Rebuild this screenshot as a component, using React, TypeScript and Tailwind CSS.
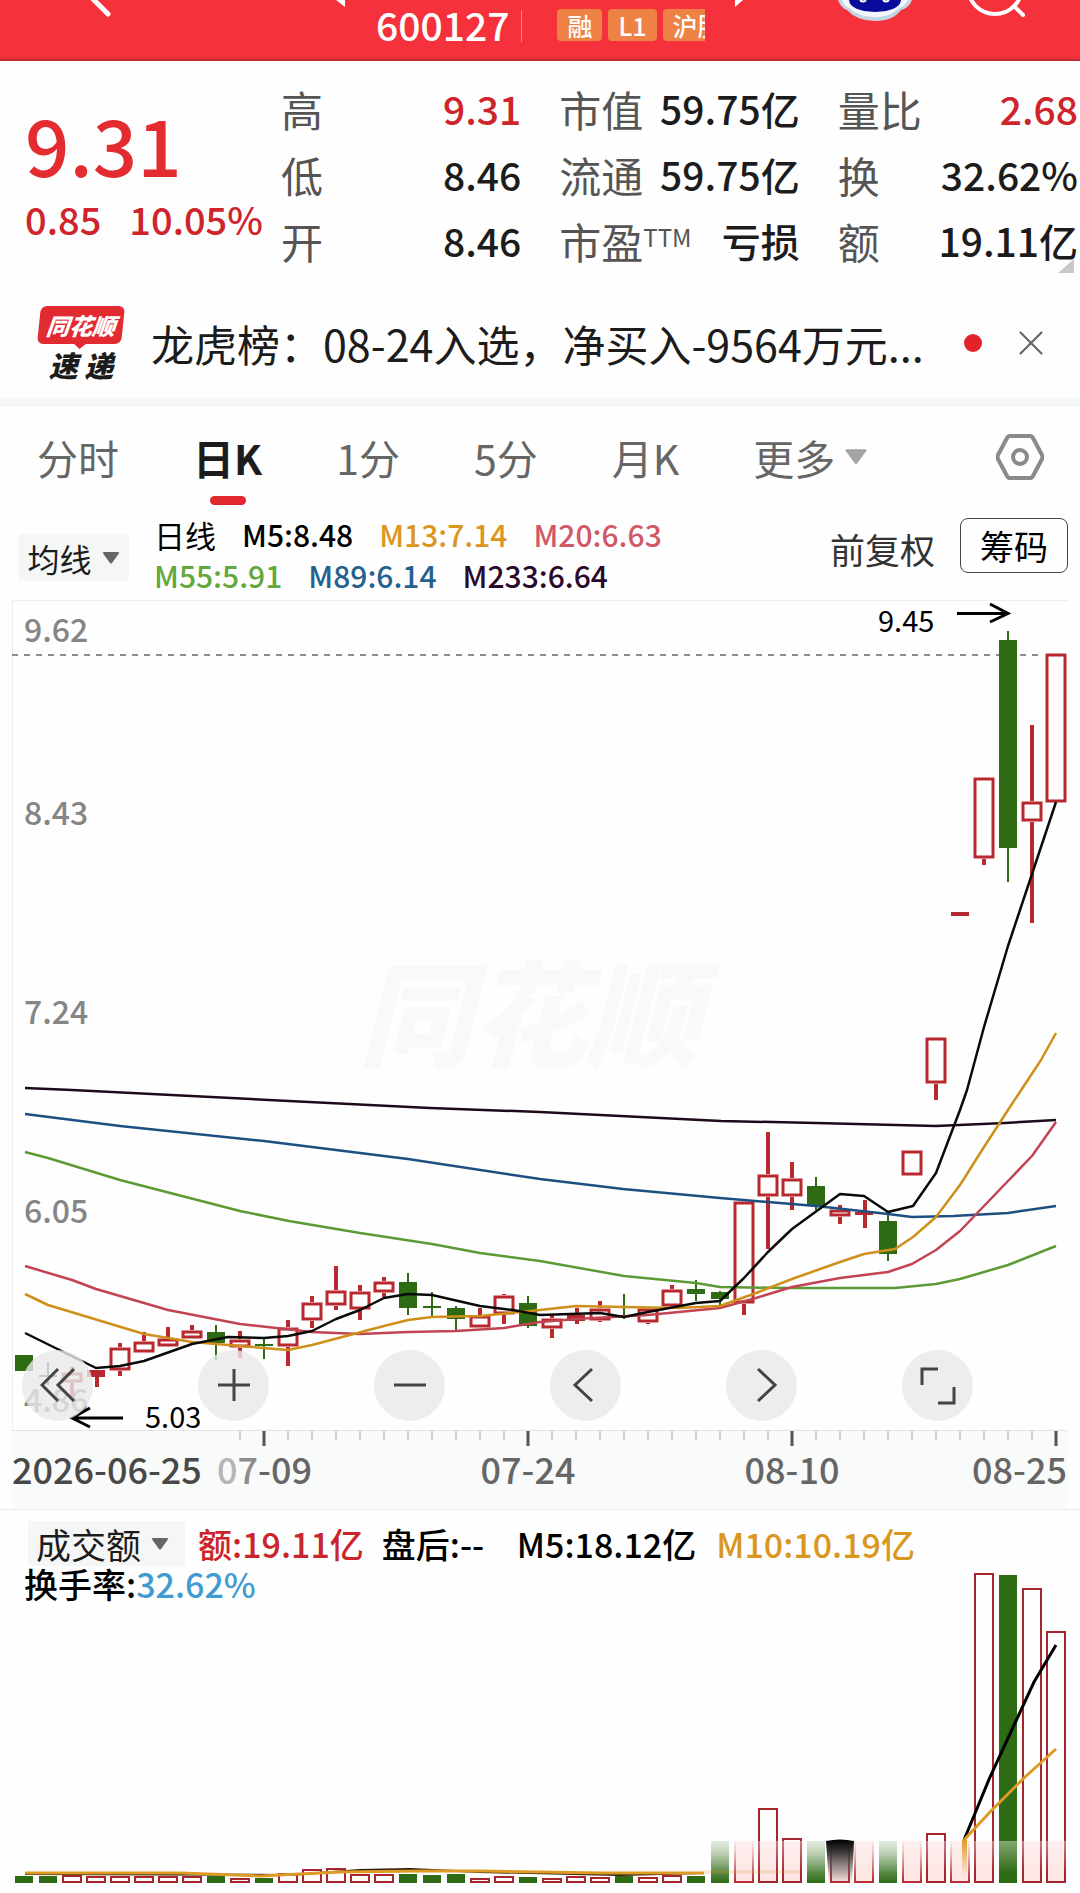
import { ReactNode } from 'react'
import { X } from 'lucide-react'

// body top, body bottom, wick top, wick bottom, rising
type Candle = [number, number, number, number, boolean]
type Point = [number, number]

const STEP = 24
const FIRST_X = 24
const RED = '#b8292f'
const GREEN = '#2f6b14'

const candles: Candle[] = [
  [1355, 1371, 1355, 1371, false],
  [1375, 1377, 1362, 1385, false],
  [1372, 1383, 1367, 1397, true],
  [1370, 1377, 1370, 1387, true],
  [1347, 1371, 1343, 1376, true],
  [1341, 1353, 1332, 1353, true],
  [1338, 1347, 1327, 1347, true],
  [1330, 1339, 1325, 1339, true],
  [1332, 1343, 1325, 1360, false],
  [1339, 1348, 1331, 1358, true],
  [1344, 1346, 1337, 1359, false],
  [1327, 1347, 1320, 1366, true],
  [1302, 1321, 1296, 1328, true],
  [1290, 1306, 1266, 1310, true],
  [1291, 1310, 1285, 1320, true],
  [1281, 1293, 1277, 1297, true],
  [1282, 1308, 1273, 1315, false],
  [1306, 1308, 1292, 1317, false],
  [1308, 1319, 1306, 1330, false],
  [1315, 1328, 1308, 1328, true],
  [1295, 1315, 1294, 1324, true],
  [1303, 1326, 1296, 1328, false],
  [1318, 1329, 1315, 1338, true],
  [1315, 1321, 1308, 1324, true],
  [1308, 1321, 1301, 1322, true],
  [1315, 1317, 1294, 1319, false],
  [1308, 1323, 1308, 1324, true],
  [1289, 1307, 1285, 1307, true],
  [1289, 1294, 1280, 1301, false],
  [1292, 1299, 1291, 1306, false],
  [1201, 1304, 1201, 1315, true],
  [1174, 1197, 1132, 1249, true],
  [1178, 1197, 1162, 1210, true],
  [1186, 1206, 1177, 1210, false],
  [1209, 1217, 1205, 1224, true],
  [1212, 1215, 1200, 1228, true],
  [1221, 1254, 1214, 1261, false],
  [1150, 1176, 1150, 1176, true],
  [1037, 1084, 1037, 1100, true],
  [912, 916, 912, 916, true],
  [777, 859, 777, 865, true],
  [640, 848, 631, 882, false],
  [801, 822, 725, 923, true],
  [653, 803, 653, 803, true],
]

const averages: { color: string; points: Point[] }[] = [
  { color: '#1f0a1c', points: [[25, 1088], [72, 1090], [289, 1101], [430, 1108], [540, 1112], [721, 1121], [816, 1123], [936, 1126], [1005, 1123], [1056, 1120]] },
  { color: '#1d4f80', points: [[25, 1114], [120, 1126], [264, 1141], [408, 1159], [540, 1179], [623, 1189], [720, 1198], [816, 1206], [888, 1214], [912, 1217], [953, 1216], [1008, 1213], [1056, 1206]] },
  { color: '#5c9a35', points: [[25, 1152], [48, 1158], [120, 1180], [240, 1211], [289, 1221], [360, 1233], [432, 1244], [480, 1253], [540, 1261], [624, 1276], [696, 1283], [720, 1287], [788, 1288], [895, 1288], [936, 1284], [960, 1279], [1008, 1265], [1056, 1246]] },
  { color: '#c24352', points: [[25, 1266], [72, 1280], [96, 1289], [168, 1310], [240, 1324], [312, 1332], [360, 1334], [408, 1332], [456, 1331], [504, 1328], [540, 1322], [576, 1319], [648, 1315], [720, 1308], [756, 1298], [792, 1287], [840, 1278], [888, 1272], [912, 1264], [936, 1250], [960, 1231], [1008, 1181], [1032, 1156], [1056, 1122]] },
  { color: '#cf8f1b', points: [[25, 1294], [48, 1305], [144, 1334], [192, 1342], [240, 1346], [288, 1350], [312, 1345], [384, 1326], [408, 1320], [432, 1317], [480, 1316], [540, 1310], [576, 1306], [624, 1307], [678, 1308], [720, 1306], [756, 1293], [792, 1279], [840, 1262], [864, 1254], [895, 1249], [913, 1237], [936, 1217], [960, 1185], [984, 1147], [1008, 1110], [1041, 1060], [1056, 1033]] },
  { color: '#0a0a0a', points: [[25, 1333], [96, 1368], [120, 1366], [144, 1361], [192, 1344], [228, 1337], [264, 1338], [288, 1336], [312, 1331], [336, 1319], [360, 1310], [384, 1298], [408, 1294], [432, 1295], [480, 1306], [513, 1310], [540, 1315], [600, 1313], [624, 1317], [648, 1312], [696, 1303], [720, 1301], [744, 1278], [768, 1252], [792, 1229], [840, 1194], [864, 1196], [888, 1212], [913, 1206], [936, 1173], [960, 1110], [967, 1090], [984, 1027], [1008, 946], [1032, 874], [1056, 802]] },
]

// bar top and direction: r rising, g falling; upper case bars fade out towards the top
const volumes: [number, string][] = [
  [1876, 'g'], [1876, 'g'], [1875, 'r'], [1876, 'r'], [1876, 'r'], [1876, 'r'], [1876, 'r'], [1876, 'r'],
  [1876, 'g'], [1878, 'r'], [1878, 'g'], [1873, 'r'], [1869, 'r'], [1868, 'r'], [1874, 'r'], [1874, 'r'],
  [1874, 'g'], [1875, 'g'], [1874, 'g'], [1878, 'r'], [1876, 'r'], [1877, 'g'], [1878, 'r'], [1876, 'r'],
  [1877, 'r'], [1876, 'g'], [1877, 'r'], [1875, 'r'], [1876, 'g'], [1841, 'G'], [1841, 'R'], [1808, 'r'],
  [1838, 'r'], [1841, 'G'], [1841, 'R'], [1841, 'R'], [1841, 'G'], [1841, 'R'], [1833, 'r'], [1841, 'R'],
  [1573, 'r'], [1575, 'g'], [1588, 'r'], [1631, 'r'],
]
const VOLUME_BASE = 1883

const toPoints = (points: Point[]) => points.map(p => p.join(',')).join(' ')

function Caret({ className }: { className: string }) {
  return (
    <svg viewBox="0 0 20 14" className={className} aria-hidden="true">
      <path d="M2 0H18Q20.500 0 19 2L11 13Q10 14 9 13L1 2Q-.5 0 2 0Z" fill="currentColor" />
    </svg>
  )
}

function Header() {
  const tagClass = 'flex h-8 shrink-0 items-center rounded-sm bg-[#ee8245] px-[10px] text-[25px] font-medium leading-8'
  return (
    <header className="flex h-[61px] items-start overflow-hidden border-b-2 border-[#c22a33] bg-[#f5313b] text-white">
      <button aria-label="返回" className="ml-[84px] shrink-0">
        <svg viewBox="0 0 32 20" className="h-5 w-8"><path d="M6-4L24 14" stroke="white" strokeWidth="5" strokeLinecap="round" /></svg>
      </button>
      <div className="ml-[220px] flex items-start">
        <svg viewBox="0 0 10 8" className="h-2 w-[10px]"><path d="M0 0H9V7Z" fill="white" /></svg>
        <span className="ml-[30px] mt-2 text-[39px] font-medium leading-8">600127</span>
        <span className="ml-3 mt-[10px] h-8 w-px bg-[#f9868b]" />
        <div className="ml-[35px] mt-[9px] flex w-[148px] gap-[6px] overflow-hidden">
          <span className={tagClass}>融</span>
          <span className={tagClass}>L1</span>
          <span className={tagClass}>沪股</span>
        </div>
        <svg viewBox="0 0 10 8" className="ml-[29px] h-2 w-[10px]"><path d="M1 0H9L1 7Z" fill="white" /></svg>
      </div>
      <button aria-label="助手" className="ml-auto mr-[53px] shrink-0">
        <svg viewBox="0 0 76 22" className="h-[22px] w-[76px]">
          <path d="M1 0Q4 8 10 10Q20 21 38 21Q56 21 64 10Q72 8 75 0Z" fill="#c3d6e4" />
          <path d="M5 0Q7 6 12 8Q22 17 38 17Q54 17 62 8Q68 6 71 0Z" fill="#f2f8fc" />
          <path d="M12 0Q13 11 38 12Q63 11 64 0Z" fill="#0a0a9c" />
          <path d="M23 0Q26 3 29 0M46 0Q49 3 52 0" stroke="white" strokeWidth="2" fill="none" />
        </svg>
      </button>
      <button aria-label="搜索" className="mr-[54px] shrink-0">
        <svg viewBox="0 0 60 20" className="h-5 w-[60px]" fill="none" stroke="white" strokeWidth="4" strokeLinecap="round">
          <circle cx="29" cy="-13" r="27" /><path d="M48 6L57 15" />
        </svg>
      </button>
    </header>
  )
}

function Quote({ label, value, red }: { label: ReactNode; value: string; red?: boolean }) {
  return (
    <div className="flex items-center justify-between whitespace-nowrap">
      <dt className="text-[42px] text-[#555]">{label}</dt>
      <dd className={`text-[39px] font-medium ${red ? 'text-[#cf242b]' : 'text-[#1c1c1c]'}`}>{value}</dd>
    </div>
  )
}

function Quotes() {
  const columnClass = 'grid flex-1 auto-rows-[66px] self-start'
  return (
    <section className="flex h-[230px] gap-[38px] pr-[2px] pt-[14px]">
      <div className="ml-[25px] w-[218px] shrink-0 text-[#e32b30]">
        <p className="mt-[14px] text-[78px] font-medium leading-[108px]">9.31</p>
        <p className="flex gap-7 whitespace-nowrap text-[38px] font-medium leading-[44px] text-[#cf242b]"><span>0.85</span><span>10.05%</span></p>
      </div>
      <dl className={columnClass}>
        <Quote label="高" value="9.31" red />
        <Quote label="低" value="8.46" />
        <Quote label="开" value="8.46" />
      </dl>
      <dl className={columnClass}>
        <Quote label="市值" value="59.75亿" />
        <Quote label="流通" value="59.75亿" />
        <Quote label={<>市盈<sup className="text-[24px]">TTM</sup></>} value="亏损" />
      </dl>
      <dl className={`${columnClass} relative`}>
        <Quote label="量比" value="2.68" red />
        <Quote label="换" value="32.62%" />
        <Quote label="额" value="19.11亿" />
        <svg viewBox="0 0 16 14" className="absolute bottom-0 right-1 h-[14px] w-4"><path d="M16 0V14H0Z" fill="#c9c9c9" /></svg>
      </dl>
    </section>
  )
}

function News() {
  return (
    <section className="flex h-[107px] items-center pb-1 pl-9 pr-7">
      <div className="flex w-[90px] shrink-0 flex-col items-center font-black italic">
        <span className="relative flex h-[38px] w-[84px] -skew-x-6 items-center justify-center rounded-md bg-[#e22a31] text-[23px] text-white">
          同花顺
          <svg viewBox="0 0 14 6" className="absolute -bottom-[5px] left-[36px] h-[6px] w-[14px]"><path d="M0 0H14L7 6Z" fill="#e22a31" /></svg>
        </span>
        <span className="mt-1 text-[29px] leading-8 text-[#1c1c1c]">速 递</span>
      </div>
      <a href="#news" className="ml-[25px] min-w-0 shrink truncate text-[43px] leading-[56px] text-[#1c1c1c]">
        龙虎榜：08-24入选，净买入-9564万元...
      </a>
      <span className="ml-auto size-[18px] shrink-0 rounded-full bg-[#e2232a]" />
      <button aria-label="关闭" className="ml-7 shrink-0 text-[#666]"><X size={42} strokeWidth={1.25} /></button>
    </section>
  )
}

function Tabs() {
  return (
    <nav className="flex h-[112px] items-start gap-[74px] whitespace-nowrap pl-[37px] pr-9 pt-[22px] text-[41px] leading-[56px] text-[#666]">
      <button>分时</button>
      <button className="flex flex-col items-center font-bold text-[#1c1c1c]">
        日K
        <span className="mt-[11px] h-[9px] w-9 rounded-full bg-[#e2292f]" />
      </button>
      <button>1分</button>
      <button>5分</button>
      <button>月K</button>
      <button className="flex items-center gap-[10px]">更多<Caret className="h-[18px] w-[22px] text-[#a3a3a3]" /></button>
      <button aria-label="设置" className="ml-auto mt-1">
        <svg viewBox="0 0 48 48" className="size-12" fill="none" stroke="#8a8a8a" strokeWidth="4">
          <path d="M14 3H34Q36 3 37 5L46 22Q47 24 46 26L37 43Q36 45 34 45H14Q12 45 11 43L2 26Q1 24 2 22L11 5Q12 3 14 3Z" />
          <circle cx="24" cy="24" r="7" />
        </svg>
      </button>
    </nav>
  )
}

function Averages() {
  return (
    <section className="flex h-[81px] items-start whitespace-nowrap pl-[18px] pr-3">
      <button className="mt-[15px] flex h-[47px] w-[111px] shrink-0 items-center justify-center gap-[10px] rounded bg-[#f5f6f6] text-[32px] text-[#1c1c1c]">
        均线<Caret className="h-3 w-[18px] text-[#666]" />
      </button>
      <div className="-mt-[5px] ml-[25px] text-[30px] font-medium leading-[41px]">
        <p className="flex gap-[26px] text-black">
          <span className="text-[31px] font-normal">日线</span><span>M5:8.48</span>
          <span className="text-[#d9971f]">M13:7.14</span>
          <span className="text-[#d05867]">M20:6.63</span>
        </p>
        <p className="flex gap-[26px]">
          <span className="text-[#62a83a]">M55:5.91</span>
          <span className="text-[#24618f]">M89:6.14</span>
          <span className="text-[#2a0a2b]">M233:6.64</span>
        </p>
      </div>
      <button className="ml-auto mt-[2px] text-[35px] leading-[56px] text-[#333]">前复权</button>
      <button className="-mt-px ml-[25px] h-[55px] w-[108px] rounded-lg border border-[#444] text-[34px] leading-[52px] text-black">筹码</button>
    </section>
  )
}

function CandleShape({ index, candle }: { index: number; candle: Candle }) {
  const [top, bottom, high, low, rising] = candle
  const x = FIRST_X + index * STEP
  const thin = bottom - top < 8
  if (!rising || thin) {
    const width = rising && !thin ? 21 : 18
    return (
      <g fill={rising ? RED : GREEN}>
        <rect x={x - 1} y={high} width={rising ? 4 : 2} height={low - high} />
        <rect x={x - width / 2} y={top} width={width} height={bottom - top} />
      </g>
    )
  }
  return (
    <g>
      <path d={`M${x} ${high}V${top}M${x} ${bottom}V${low}`} stroke={RED} strokeWidth="4" />
      <rect x={x - 9} y={top + 2} width="18" height={bottom - top - 4} fill="#fefefe" stroke={RED} strokeWidth="3" />
    </g>
  )
}

function PriceChart() {
  return (
    <svg viewBox="0 600 1080 909" className="block h-auto w-full" role="img" aria-label="日K线图">
      <rect x="12" y="1430" width="1056" height="79" fill="#f9fafa" />
      <path d="M12.500 1430V600.500H1067.500" fill="none" stroke="#ededed" />
      <text x="358" y="1058" fontSize="114" fontWeight="900" fontStyle="italic" fill="#f9f9f9">同花顺</text>
      <path d="M12 655H1044" stroke="#8c8c8c" strokeWidth="2" strokeDasharray="6 6" />
      <g fontSize="32" fontWeight="500" fill="#858585">
        <text x="24" y="642">9.62</text>
        <text x="24" y="825">8.43</text>
        <text x="24" y="1024">7.24</text>
        <text x="24" y="1223">6.05</text>
        <text x="24" y="1412">4.86</text>
      </g>
      {candles.map((c, i) => <CandleShape key={i} index={i} candle={c} />)}
      {averages.map(a => (
        <polyline key={a.color} points={toPoints(a.points)} fill="none" stroke={a.color} strokeWidth="2.500" strokeLinejoin="round" />
      ))}
      <g fill="none" stroke="black" strokeWidth="3">
        <path d="M957 613.500H1006M990 604L1008 613.500L990 622" />
        <path d="M123 1418H74M90 1408L72 1418L90 1427" />
      </g>
      <g fontSize="29" fill="black">
        <text x="878" y="632">9.45</text>
        <text x="145" y="1428">5.03</text>
      </g>
      <path d="M12 1430.500H1067" stroke="#e4e4e4" />
      {candles.slice(9).map((_, i) => {
        const x = FIRST_X + (i + 9) * STEP
        const major = (i + 9) % 11 === 10
        return <path key={i} d={`M${x} 1431V${major ? 1446 : 1440}`} stroke={major ? '#555' : '#aaa'} strokeWidth={major ? 3 : 1} />
      })}
      <g fontSize="36" fontWeight="500" fill="#666">
        <text x="12" y="1484" fill="#484848">2026-06-25</text>
        <text x="217" y="1484"><tspan fill="#b5b5b5">0</tspan><tspan fill="#8c8c8c">7</tspan>-09</text>
        <text x="528" y="1484" textAnchor="middle">07-24</text>
        <text x="792" y="1484" textAnchor="middle">08-10</text>
        <text x="1067" y="1484" textAnchor="end">08-25</text>
      </g>
    </svg>
  )
}

const controls = [
  { label: '更早', d: 'M33 1L17 17L33 33M17 1L1 17L17 33' },
  { label: '放大', d: 'M17 1V33M1 17H33' },
  { label: '缩小', d: 'M1 17H33' },
  { label: '左移', d: 'M23 1L6 17L23 33' },
  { label: '右移', d: 'M13 1L30 17L13 33' },
  { label: '全屏', d: 'M1 17V1H17M33 19V35H17' },
]

function ChartControls() {
  return (
    <div className="absolute bottom-[88px] left-[22px] right-[107px] flex justify-between">
      {controls.map(c => (
        <button key={c.label} aria-label={c.label} className="flex size-[71px] items-center justify-center rounded-full bg-[#e9e9e9]/80">
          <svg viewBox="-1 -1 36 38" className="h-[38px] w-9" fill="none" stroke="#444" strokeWidth="3"><path d={c.d} /></svg>
        </button>
      ))}
    </div>
  )
}

function VolumeChart() {
  return (
    <svg viewBox="0 1609 1080 284" className="block h-auto w-full overflow-visible" role="img" aria-label="成交额">
      <defs>
        <linearGradient id="fadeGreen" x1="0" y1="0" x2="0" y2="1">
          <stop offset="0" stopColor={GREEN} stopOpacity="0.200" /><stop offset="0.500" stopColor={GREEN} stopOpacity="0.600" /><stop offset="1" stopColor={GREEN} />
        </linearGradient>
        <linearGradient id="fadeRed" gradientUnits="userSpaceOnUse" x1="0" y1="1841" x2="0" y2="1883">
          <stop offset="0" stopColor={RED} stopOpacity="0.100" /><stop offset="1" stopColor={RED} />
        </linearGradient>
        <linearGradient id="fadeBlack" x1="0" y1="0" x2="0" y2="1">
          <stop offset="0" stopColor="black" /><stop offset="0.250" stopColor="black" stopOpacity="0.800" /><stop offset="1" stopColor="black" stopOpacity="0" />
        </linearGradient>
        <linearGradient id="fadeOrange" gradientUnits="userSpaceOnUse" x1="0" y1="1840" x2="0" y2="1876">
          <stop offset="0" stopColor="#dd9a24" /><stop offset="1" stopColor="#dd9a24" stopOpacity="0" />
        </linearGradient>
        <linearGradient id="haze" x1="0" y1="0" x2="0" y2="1">
          <stop offset="0" stopColor="white" stopOpacity="0.400" /><stop offset="1" stopColor="white" stopOpacity="0" />
        </linearGradient>
      </defs>
      {volumes.map(([top, kind], i) => {
        const x = FIRST_X + i * STEP
        const height = VOLUME_BASE - top
        if (kind === 'g' || kind === 'G') {
          return <rect key={i} x={x - 9} y={top} width="18" height={height} fill={kind === 'G' ? 'url(#fadeGreen)' : GREEN} />
        }
        return (
          <g key={i}>
            {i > 29 && <rect x={x - 9} y="1841" width="18" height="42" fill="#fde6e4" />}
            {kind === 'R'
              ? <path d={`M${x - 9} ${top}V${VOLUME_BASE - 1}H${x + 9}V${top}`} fill="none" stroke="url(#fadeRed)" strokeWidth="2" />
              : <rect x={x - 9} y={top + 1} width="18" height={height - 2} fill="none" stroke="#a5262c" strokeWidth="2" />}
          </g>
        )
      })}
      <rect x="702" y="1841" width="366" height="32" fill="url(#haze)" />
      <path d="M826 1841Q840 1838 854 1841L852 1883H829Z" fill="url(#fadeBlack)" />
      <path d="M25 1874L290 1875L360 1870L410 1869L480 1872L620 1875L704 1873" fill="none" stroke="#2b1a08" strokeWidth="2" />
      <path d="M25 1873L180 1873L260 1876L340 1872L420 1871L480 1871L600 1873L704 1873" fill="none" stroke="#dd9a24" strokeWidth="3" />
      <path d="M704 1872H800" stroke="#dd9a24" strokeWidth="3" opacity="0.200" />
      <polyline points="964,1840 990,1777 1015,1723 1034,1682 1056,1645" fill="none" stroke="black" strokeWidth="3" />
      <polyline points="964,1840 990,1812 1025,1777 1056,1749" fill="none" stroke="#dd9a24" strokeWidth="3" />
      <rect x="962" y="1840" width="5" height="36" fill="url(#fadeOrange)" />
    </svg>
  )
}

export default function App() {
  return (
    <main className="w-full overflow-hidden bg-[#fefefe] font-['Noto_Sans_CJK_SC','Noto_Sans',sans-serif]">
      <Header />
      <Quotes />
      <News />
      <div className="h-[9px] bg-[#f5f7f7]" />
      <Tabs />
      <Averages />
      <div className="relative">
        <PriceChart />
        <ChartControls />
      </div>
      <section className="border-t border-[#ececec]">
        <div className="flex h-[99px] flex-col pl-6 pt-[11px] text-[34px] font-medium leading-[45px] text-black">
          <div className="flex items-center whitespace-nowrap">
            <button className="ml-1 flex h-[45px] w-[157px] items-center gap-[10px] bg-[#f5f6f6] pl-2 text-[35px] font-normal text-[#1c1c1c]">
              成交额<Caret className="h-3 w-[18px] text-[#666]" />
            </button>
            <span className="ml-[13px] text-[#c9252b]">额:19.11亿</span>
            <span className="ml-[18px] min-w-[121px]">盘后:--</span>
            <span className="ml-[14px]">M5:18.12亿</span>
            <span className="ml-[20px] text-[#d9971f]">M10:10.19亿</span>
          </div>
          <p className="-mt-[5px]">换手率:<span className="text-[#3f9bd0]">32.62%</span></p>
        </div>
        <VolumeChart />
      </section>
    </main>
  )
}
